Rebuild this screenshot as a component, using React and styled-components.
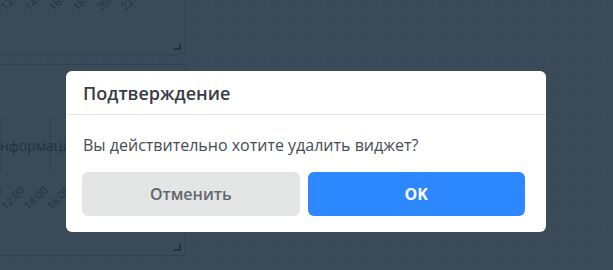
import React from "react";
import styled, { createGlobalStyle } from "styled-components";

const Global = createGlobalStyle`
  html, body { margin: 0; padding: 0; }
  body {
    width: 613px; height: 270px; overflow: hidden;
    background: #3a4a59;
    font-family: "Open Sans", "Noto Sans", sans-serif;
  }
`;

const Dashboard = styled.div`
  position: relative;
  width: 613px;
  height: 270px;
  overflow: hidden;
  background-color: #3a4a59;
  background-image: radial-gradient(circle, #334250 1px, transparent 1.6px);
  background-size: 14px 14px;
  background-position: 5px -1px;
`;

const Column = styled.div`
  display: flex;
  flex-direction: column;
  gap: 9px;
  width: 192px;
  margin-top: -65px;
  margin-left: -6px;
`;

const Card = styled.div`
  position: relative;
  height: ${(p) => p.$h}px;
  box-sizing: border-box;
  background: #3a4a59;
  border: 1px solid #334250;
  border-radius: 3px;
  overflow: hidden;
`;

const Corner = styled.div`
  position: absolute;
  right: 4px;
  bottom: 4px;
  width: 5px;
  height: 5px;
  border-right: 2px solid #26313c;
  border-bottom: 2px solid #26313c;
`;

const AxisRow = styled.div`
  display: flex;
  gap: ${(p) => p.$gap}px;
  margin-left: ${(p) => p.$pl}px;
  padding-top: ${(p) => p.$pt}px;
`;

const Tick = styled.span`
  display: inline-block;
  width: 0;
  font-size: 11px;
  color: #27333e;
  white-space: nowrap;
  transform: rotate(-45deg);
  transform-origin: left bottom;
  line-height: 12px;
`;

const ChartBody = styled.div`
  position: relative;
  height: 55px;
  margin-top: 53px;
  display: flex;
  align-items: center;
  background-image: linear-gradient(90deg, #334250 1px, transparent 1px);
  background-size: 49px 100%;
  background-position: 6px 0;
`;

const Legend = styled.span`
  font-size: 14px;
  color: #26313c;
  margin-left: -4px;
`;

const Overlay = styled.div`
  position: absolute;
  inset: 0;
`;

const Modal = styled.div`
  position: absolute;
  left: 66px;
  top: 71px;
  width: 480px;
  background: #fff;
  border-radius: 6px;
  overflow: hidden;
`;

const Header = styled.div`
  height: 44px;
  box-sizing: border-box;
  display: flex;
  align-items: center;
  padding: 0 17px;
  border-bottom: 1px solid #e6e6e6;
  font-size: 18px;
  font-weight: 600;
  color: #363c42;
`;

const Body = styled.div`
  padding: 18px 21px 16px 16px;
`;

const Message = styled.div`
  font-size: 16px;
  color: #464c52;
  padding-left: 1px;
  line-height: 24px;
  margin-bottom: 15px;
`;

const Buttons = styled.div`
  display: grid;
  grid-template-columns: 1fr 1fr;
  gap: 8px;
`;

const Button = styled.button`
  height: 44px;
  border: none;
  border-radius: 6px;
  font-family: inherit;
  font-size: 16px;
  font-weight: ${(p) => (p.$primary ? 700 : 600)};
  background: ${(p) => (p.$primary ? "#2d87ff" : "#e4e5e5")};
  color: ${(p) => (p.$primary ? "#ffffff" : "#62676c")};
  cursor: pointer;
`;

export default function App() {
  const top = ["12:00", "14:00", "16:00", "18:00", "20:00", "22:00"];
  const bottom = ["10:00", "12:00", "14:00", "16:00", "18:00"];
  return (
    <>
      <Global />
      <Dashboard>
        <Column>
          <Card $h={120}>
            <AxisRow $gap={24} $pl={12} $pt={65}>
              {top.map((t) => (
                <Tick key={t}>{t}</Tick>
              ))}
            </AxisRow>
            <Corner />
          </Card>
          <Card $h={192}>
            <ChartBody>
              <Legend>информация</Legend>
            </ChartBody>
            <AxisRow $gap={23} $pl={-11} $pt={27}>
              {bottom.map((t) => (
                <Tick key={t}>{t}</Tick>
              ))}
            </AxisRow>
            <Corner />
          </Card>
        </Column>
        <Overlay>
          <Modal>
            <Header>Подтверждение</Header>
            <Body>
              <Message>Вы действительно хотите удалить виджет?</Message>
              <Buttons>
                <Button>Отменить</Button>
                <Button $primary>OK</Button>
              </Buttons>
            </Body>
          </Modal>
        </Overlay>
      </Dashboard>
    </>
  );
}
